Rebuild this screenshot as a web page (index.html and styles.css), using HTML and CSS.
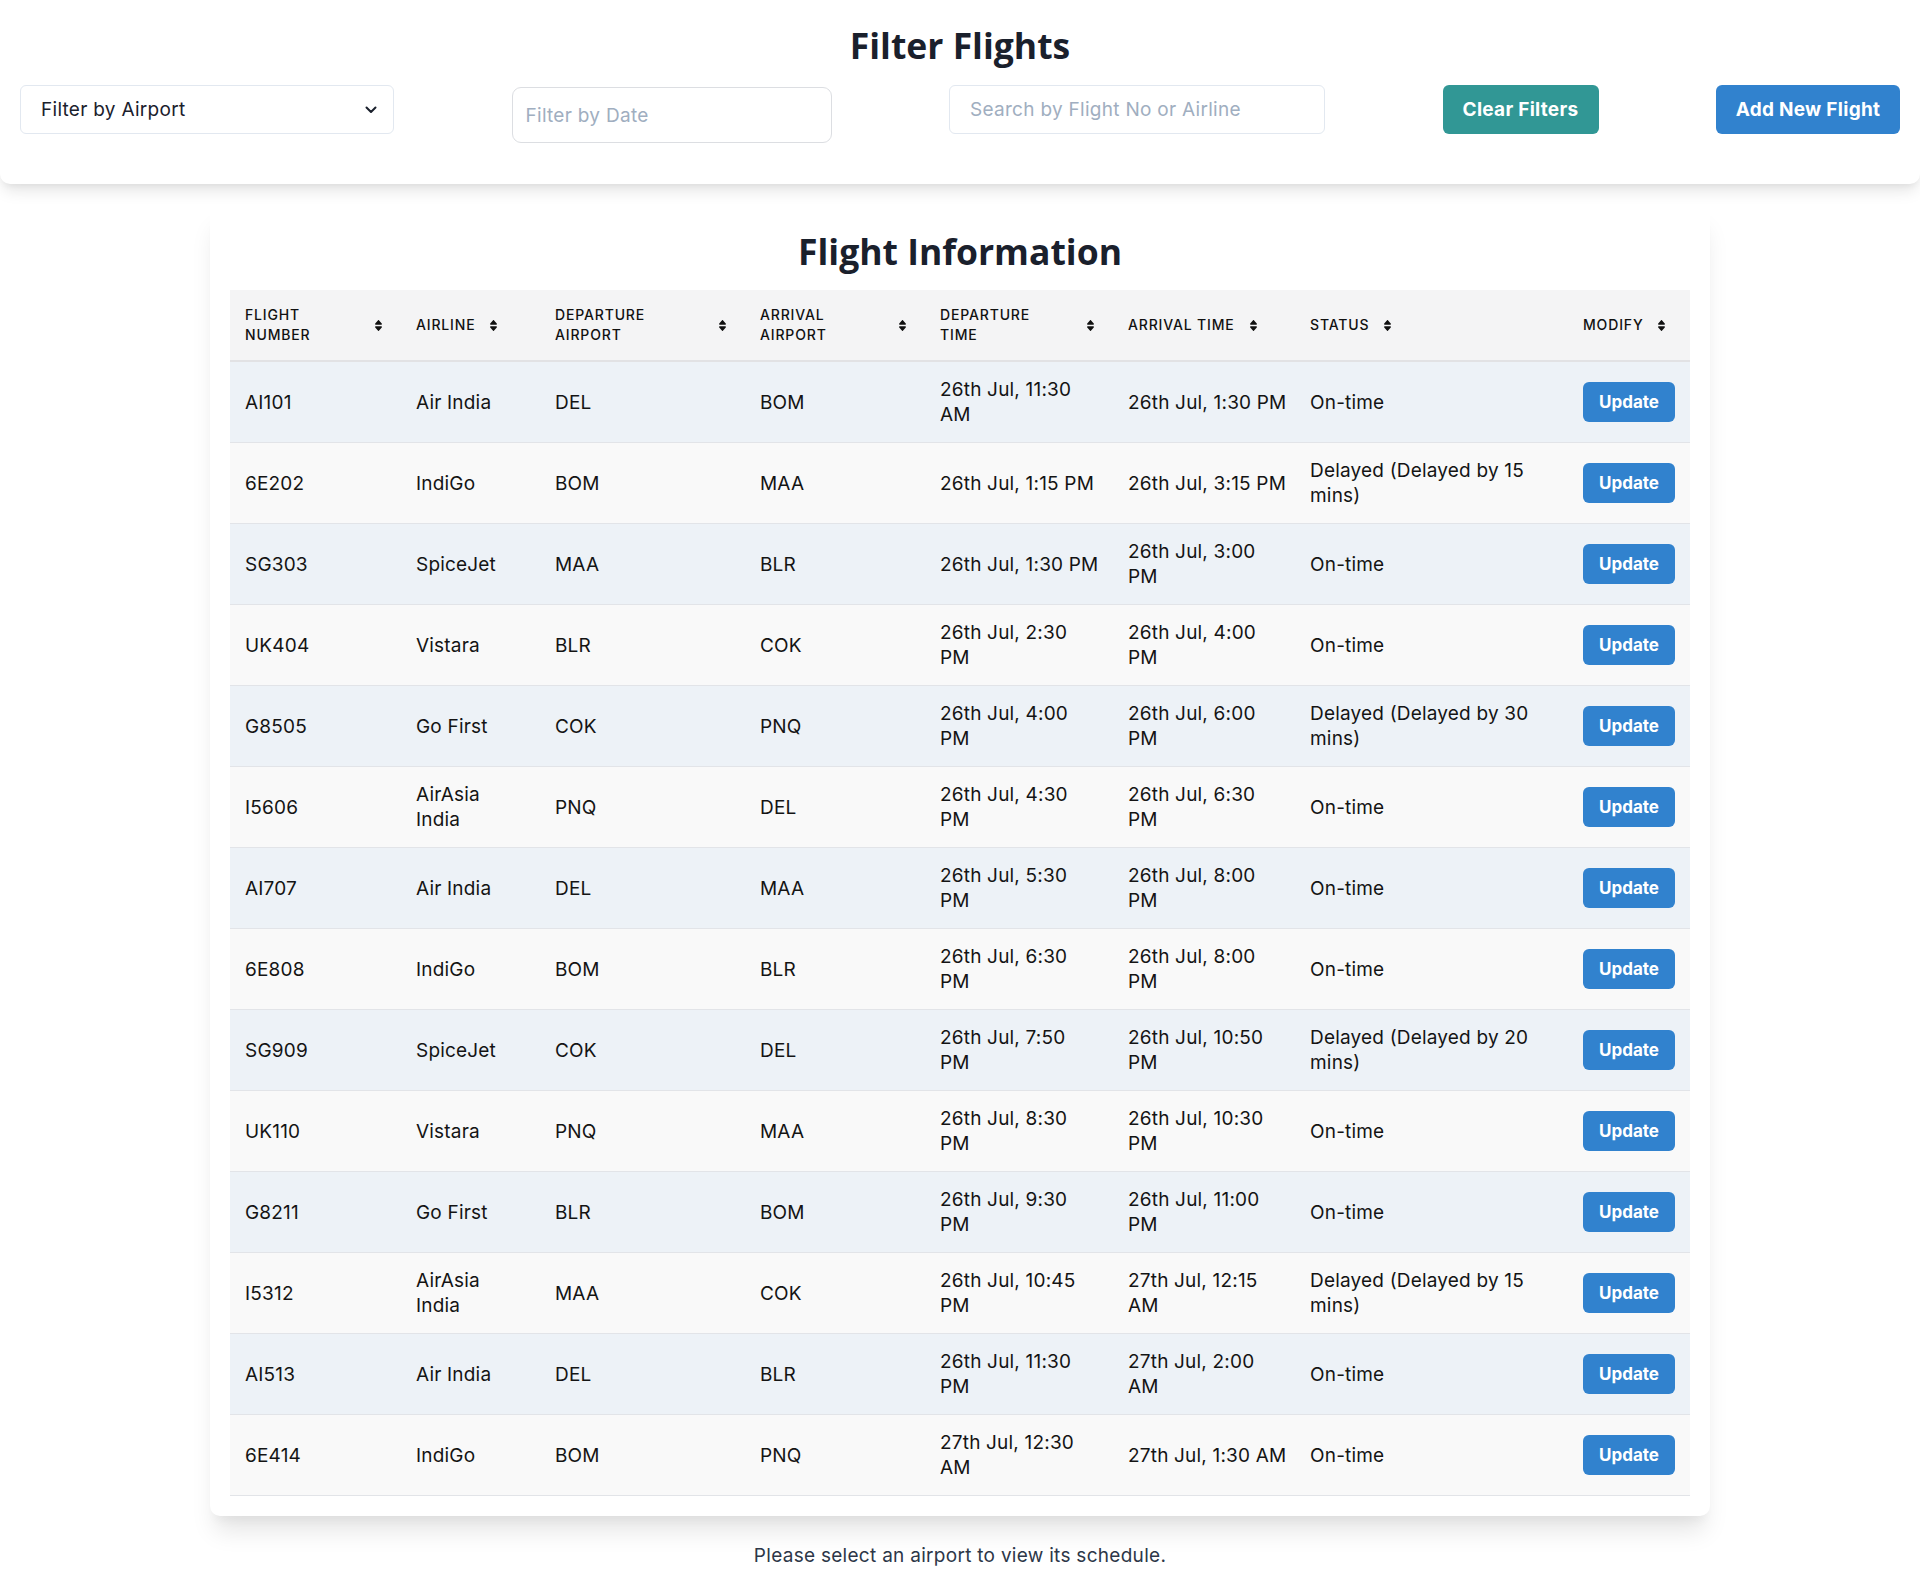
FILE: index.html
```html
<!DOCTYPE html>
<html lang="en">
<head>
<meta charset="utf-8">
<title>Flights</title>
<link rel="stylesheet" href="styles.css">
</head>
<body>
<header class="topbar">
  <h1 class="heading">Filter Flights</h1>
  <div class="controls">
    <div class="select">
      <span>Filter by Airport</span>
      <svg class="chev" width="12" height="8" viewBox="0 0 12 8"><polyline points="1.5,1.5 6,6 10.5,1.5" fill="none" stroke="#1a202c" stroke-width="2" stroke-linecap="round" stroke-linejoin="round"/></svg>
    </div>
    <input class="date-input" type="text" placeholder="Filter by Date">
    <input class="search-input" type="text" placeholder="Search by Flight No or Airline">
    <button class="btn btn-teal">Clear Filters</button>
    <button class="btn btn-blue">Add New Flight</button>
  </div>
</header>

<main class="card">
  <h2 class="heading card-title">Flight Information</h2>
  <table class="flights">
    <colgroup>
      <col style="width:171px"><col style="width:139px"><col style="width:205px"><col style="width:180px">
      <col style="width:188px"><col style="width:182px"><col style="width:273px"><col style="width:122px">
    </colgroup>
    <thead>
      <tr>
        <th><div class="th grow"><span>Flight<br>Number</span><svg class="sort" viewBox="14 54 292 404" preserveAspectRatio="none"><path d="M41 288h238c21.4 0 32.1 25.9 17 41L177 448c-9.4 9.4-24.6 9.4-33.9 0L24 329c-15.1-15.1-4.4-41 17-41zm255-105L177 64c-9.4-9.4-24.6-9.4-33.9 0L24 183c-15.1 15.1-4.4 41 17 41h238c21.4 0 32.1-25.9 17-41z"/></svg></div></th>
        <th><div class="th"><span>Airline</span><svg class="sort" viewBox="14 54 292 404" preserveAspectRatio="none"><path d="M41 288h238c21.4 0 32.1 25.9 17 41L177 448c-9.4 9.4-24.6 9.4-33.9 0L24 329c-15.1-15.1-4.4-41 17-41zm255-105L177 64c-9.4-9.4-24.6-9.4-33.9 0L24 183c-15.1 15.1-4.4 41 17 41h238c21.4 0 32.1-25.9 17-41z"/></svg></div></th>
        <th><div class="th grow"><span>Departure<br>Airport</span><svg class="sort" viewBox="14 54 292 404" preserveAspectRatio="none"><path d="M41 288h238c21.4 0 32.1 25.9 17 41L177 448c-9.4 9.4-24.6 9.4-33.9 0L24 329c-15.1-15.1-4.4-41 17-41zm255-105L177 64c-9.4-9.4-24.6-9.4-33.9 0L24 183c-15.1 15.1-4.4 41 17 41h238c21.4 0 32.1-25.9 17-41z"/></svg></div></th>
        <th><div class="th grow"><span>Arrival<br>Airport</span><svg class="sort" viewBox="14 54 292 404" preserveAspectRatio="none"><path d="M41 288h238c21.4 0 32.1 25.9 17 41L177 448c-9.4 9.4-24.6 9.4-33.9 0L24 329c-15.1-15.1-4.4-41 17-41zm255-105L177 64c-9.4-9.4-24.6-9.4-33.9 0L24 183c-15.1 15.1-4.4 41 17 41h238c21.4 0 32.1-25.9 17-41z"/></svg></div></th>
        <th><div class="th grow"><span>Departure<br>Time</span><svg class="sort" viewBox="14 54 292 404" preserveAspectRatio="none"><path d="M41 288h238c21.4 0 32.1 25.9 17 41L177 448c-9.4 9.4-24.6 9.4-33.9 0L24 329c-15.1-15.1-4.4-41 17-41zm255-105L177 64c-9.4-9.4-24.6-9.4-33.9 0L24 183c-15.1 15.1-4.4 41 17 41h238c21.4 0 32.1-25.9 17-41z"/></svg></div></th>
        <th><div class="th"><span>Arrival Time</span><svg class="sort" viewBox="14 54 292 404" preserveAspectRatio="none"><path d="M41 288h238c21.4 0 32.1 25.9 17 41L177 448c-9.4 9.4-24.6 9.4-33.9 0L24 329c-15.1-15.1-4.4-41 17-41zm255-105L177 64c-9.4-9.4-24.6-9.4-33.9 0L24 183c-15.1 15.1-4.4 41 17 41h238c21.4 0 32.1-25.9 17-41z"/></svg></div></th>
        <th><div class="th"><span>Status</span><svg class="sort" viewBox="14 54 292 404" preserveAspectRatio="none"><path d="M41 288h238c21.4 0 32.1 25.9 17 41L177 448c-9.4 9.4-24.6 9.4-33.9 0L24 329c-15.1-15.1-4.4-41 17-41zm255-105L177 64c-9.4-9.4-24.6-9.4-33.9 0L24 183c-15.1 15.1-4.4 41 17 41h238c21.4 0 32.1-25.9 17-41z"/></svg></div></th>
        <th><div class="th"><span>Modify</span><svg class="sort" viewBox="14 54 292 404" preserveAspectRatio="none"><path d="M41 288h238c21.4 0 32.1 25.9 17 41L177 448c-9.4 9.4-24.6 9.4-33.9 0L24 329c-15.1-15.1-4.4-41 17-41zm255-105L177 64c-9.4-9.4-24.6-9.4-33.9 0L24 183c-15.1 15.1-4.4 41 17 41h238c21.4 0 32.1-25.9 17-41z"/></svg></div></th>
      </tr>
    </thead>
    <tbody>
      <tr><td>AI101</td><td>Air India</td><td>DEL</td><td>BOM</td><td>26th Jul, 11:30<br>AM</td><td>26th Jul, 1:30 PM</td><td>On-time</td><td><button class="upd">Update</button></td></tr>
      <tr><td>6E202</td><td>IndiGo</td><td>BOM</td><td>MAA</td><td>26th Jul, 1:15 PM</td><td>26th Jul, 3:15 PM</td><td>Delayed (Delayed by 15<br>mins)</td><td><button class="upd">Update</button></td></tr>
      <tr><td>SG303</td><td>SpiceJet</td><td>MAA</td><td>BLR</td><td>26th Jul, 1:30 PM</td><td>26th Jul, 3:00<br>PM</td><td>On-time</td><td><button class="upd">Update</button></td></tr>
      <tr><td>UK404</td><td>Vistara</td><td>BLR</td><td>COK</td><td>26th Jul, 2:30<br>PM</td><td>26th Jul, 4:00<br>PM</td><td>On-time</td><td><button class="upd">Update</button></td></tr>
      <tr><td>G8505</td><td>Go First</td><td>COK</td><td>PNQ</td><td>26th Jul, 4:00<br>PM</td><td>26th Jul, 6:00<br>PM</td><td>Delayed (Delayed by 30<br>mins)</td><td><button class="upd">Update</button></td></tr>
      <tr><td>I5606</td><td>AirAsia<br>India</td><td>PNQ</td><td>DEL</td><td>26th Jul, 4:30<br>PM</td><td>26th Jul, 6:30<br>PM</td><td>On-time</td><td><button class="upd">Update</button></td></tr>
      <tr><td>AI707</td><td>Air India</td><td>DEL</td><td>MAA</td><td>26th Jul, 5:30<br>PM</td><td>26th Jul, 8:00<br>PM</td><td>On-time</td><td><button class="upd">Update</button></td></tr>
      <tr><td>6E808</td><td>IndiGo</td><td>BOM</td><td>BLR</td><td>26th Jul, 6:30<br>PM</td><td>26th Jul, 8:00<br>PM</td><td>On-time</td><td><button class="upd">Update</button></td></tr>
      <tr><td>SG909</td><td>SpiceJet</td><td>COK</td><td>DEL</td><td>26th Jul, 7:50<br>PM</td><td>26th Jul, 10:50<br>PM</td><td>Delayed (Delayed by 20<br>mins)</td><td><button class="upd">Update</button></td></tr>
      <tr><td>UK110</td><td>Vistara</td><td>PNQ</td><td>MAA</td><td>26th Jul, 8:30<br>PM</td><td>26th Jul, 10:30<br>PM</td><td>On-time</td><td><button class="upd">Update</button></td></tr>
      <tr><td>G8211</td><td>Go First</td><td>BLR</td><td>BOM</td><td>26th Jul, 9:30<br>PM</td><td>26th Jul, 11:00<br>PM</td><td>On-time</td><td><button class="upd">Update</button></td></tr>
      <tr><td>I5312</td><td>AirAsia<br>India</td><td>MAA</td><td>COK</td><td>26th Jul, 10:45<br>PM</td><td>27th Jul, 12:15<br>AM</td><td>Delayed (Delayed by 15<br>mins)</td><td><button class="upd">Update</button></td></tr>
      <tr><td>AI513</td><td>Air India</td><td>DEL</td><td>BLR</td><td>26th Jul, 11:30<br>PM</td><td>27th Jul, 2:00<br>AM</td><td>On-time</td><td><button class="upd">Update</button></td></tr>
      <tr><td>6E414</td><td>IndiGo</td><td>BOM</td><td>PNQ</td><td>27th Jul, 12:30<br>AM</td><td>27th Jul, 1:30 AM</td><td>On-time</td><td><button class="upd">Update</button></td></tr>
    </tbody>
  </table>
</main>

<p class="note">Please select an airport to view its schedule.</p>
</body>
</html>
```

FILE: styles.css
```css
* { box-sizing: border-box; }

body {
  margin: 0;
  background: #ffffff;
  color: #1a202c;
  font-family: "Inter", "Roboto", sans-serif;
  font-size: 19px;
  letter-spacing: 0.015em;
}

.heading {
  font-family: "Open Sans", sans-serif;
  font-weight: 700;
  font-size: 35.5px;
  line-height: 43px;
  letter-spacing: 0;
  color: #1a202c;
  text-align: center;
  margin: 0;
}

.topbar {
  background: #fff;
  padding: 24px 20px 41px;
  border-radius: 0 0 10px 10px;
  box-shadow: 0 10px 15px -3px rgba(0,0,0,0.10), 0 4px 6px -2px rgba(0,0,0,0.05);
}

.controls {
  display: flex;
  justify-content: space-between;
  align-items: flex-start;
  margin-top: 18px;
}

.select {
  width: 374px;
  height: 49px;
  border: 1px solid #e2e8f0;
  border-radius: 6px;
  display: flex;
  align-items: center;
  justify-content: space-between;
  padding: 0 16px 0 20px;
  color: #1a202c;
  font-size: 19px;
}
.chev { display: block; }

input {
  font-family: inherit;
  font-size: 19px;
  letter-spacing: 0.015em;
  color: #1a202c;
  outline: none;
  background: #fff;
}
input::placeholder { color: #a0aec0; }

.date-input {
  width: 320px;
  height: 56px;
  margin-top: 2px;
  border: 1px solid #dcdee2;
  border-radius: 9px;
  padding: 0 13px;
}

.search-input {
  width: 376px;
  height: 49px;
  border: 1px solid #e2e8f0;
  border-radius: 6px;
  padding: 0 20px;
}

.btn {
  height: 49px;
  border: none;
  border-radius: 6px;
  color: #fff;
  font-family: inherit;
  font-size: 19px;
  letter-spacing: 0.015em;
  font-weight: 700;
  cursor: pointer;
}
.btn-teal { background: #319795; width: 156px; }
.btn-blue { background: #3182ce; width: 184px; }

.card {
  width: 1500px;
  margin: 21px auto 0;
  background: #fff;
  border-radius: 10px;
  padding: 24px 20px 20px;
  box-shadow: 0 20px 25px -5px rgba(0,0,0,0.10), 0 10px 10px -5px rgba(0,0,0,0.04);
}

.card-title {
  line-height: 44px;
  margin-bottom: 17px;
}

.flights {
  width: 1460px;
  table-layout: fixed;
  border-collapse: collapse;
}

.flights th {
  background: #f4f4f5;
  padding: 15px 15px;
  text-align: left;
  font-size: 14px;
  font-weight: 500;
  line-height: 20px;
  letter-spacing: 0.06em;
  text-transform: uppercase;
  color: #111;
  border-bottom: 2px solid #e2e2e4;
  vertical-align: middle;
}

.th {
  display: flex;
  align-items: center;
  gap: 15px;
}
.th.grow span { flex: 1; }
.th.grow .sort { margin-right: 4px; }

.sort {
  width: 7px;
  height: 11px;
  fill: #111;
  flex: none;
}

.flights td {
  padding: 15px 15px;
  font-size: 19px;
  line-height: 25px;
  letter-spacing: 0.01em;
  color: #141414;
  white-space: nowrap;
  vertical-align: middle;
  border-bottom: 1px solid #e2e4e8;
}

.flights tbody tr:nth-child(odd) td { background: #edf2f7; }
.flights tbody tr:nth-child(even) td { background: #f9f9f9; }

.upd {
  width: 92px;
  height: 40px;
  border: none;
  border-radius: 6px;
  background: #3182ce;
  color: #fff;
  font-family: inherit;
  font-size: 17px;
  letter-spacing: 0;
  font-weight: 700;
  display: block;
}

.note {
  text-align: center;
  margin: 26px 0 0;
  font-size: 19px;
  line-height: 27px;
  color: #2d3748;
}
```
